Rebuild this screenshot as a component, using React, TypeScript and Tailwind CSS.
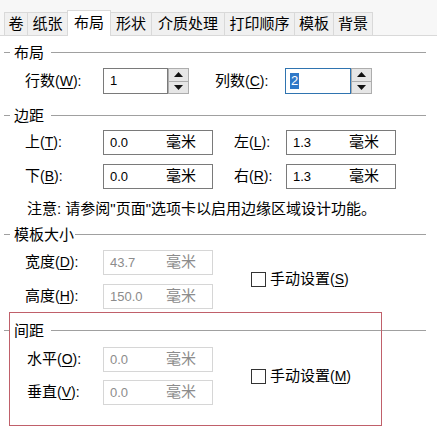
import React from 'react';

const tabs = [
  { label: '卷', w: 'w-[24px]' },
  { label: '纸张', w: 'w-[41px]' },
  { label: '布局', w: 'w-[44px]', active: true },
  { label: '形状', w: 'w-[42px]' },
  { label: '介质处理', w: 'w-[74px]' },
  { label: '打印顺序', w: 'w-[71px]' },
  { label: '模板', w: 'w-[40px]' },
  { label: '背景', w: 'w-[40px]' },
];

const Key = ({ k }: { k: string }) => (
  <span className="text-[14px]">
    (<span className="underline underline-offset-2">{k}</span>)
  </span>
);

const Header = ({ label, gap = 'ml-[7px]', mt }: { label: string; gap?: string; mt: string }) => (
  <div className={`flex items-center h-[20px] ${mt}`}>
    <span className="ml-[4px] w-[6px] h-px bg-[#a0a0a0]" />
    <span className="ml-[4px] text-[15px] leading-none">{label}</span>
    <span className={`${gap} mr-[11px] flex-1 h-px bg-[#a0a0a0]`} />
  </div>
);

const Field = ({ value, disabled }: { value: string; disabled?: boolean }) => (
  <div
    className={`w-[110px] h-[25px] flex items-center border ${
      disabled ? 'border-[#d6d6d6] text-[#8c8c8c]' : 'border-[#7a7a7a] text-black'
    }`}
  >
    <span className="pl-[6px] w-[62px] text-[13px]">{value}</span>
    <span className="text-[15px]">毫米</span>
  </div>
);

const Spinner = () => (
  <div className="w-[21px] h-[26px] flex flex-col border border-[#adadad] bg-[#e6e6e6]">
    <div className="flex-1 flex items-center justify-center border-b border-[#adadad]">
      <svg width="9" height="5" viewBox="0 0 9 5">
        <polygon points="0,5 9,5 4.5,0" fill="#111" />
      </svg>
    </div>
    <div className="flex-1 flex items-center justify-center">
      <svg width="9" height="5" viewBox="0 0 9 5">
        <polygon points="0,0 9,0 4.5,5" fill="#111" />
      </svg>
    </div>
  </div>
);

const Label = ({ text, k, cls }: { text: string; k: string; cls: string }) => (
  <div className={`${cls} text-[15px] flex items-center`}>
    {text}
    <Key k={k} />
    <span className="text-[14px]">:</span>
  </div>
);

const Check = ({ k }: { k: string }) => (
  <div className="ml-[38px] flex items-center">
    <span className="w-[15px] h-[15px] border border-[#333]" />
    <span className="ml-[4px] text-[15px]">手动设置</span>
    <Key k={k} />
  </div>
);

export default function App() {
  return (
    <div className="relative w-[437px] h-[446px] bg-white text-black font-['Liberation_Sans','Noto_Sans_CJK_SC',sans-serif]">
      {/* Tabs */}
      <div className="h-[36px] bg-[#f7f7f7] border-b border-[#d9d9d9] flex items-end pl-[4px]">
        {tabs.map((t) => (
          <div
            key={t.label}
            className={`${t.w} flex items-center justify-center text-[15px] border border-b-0 border-[#d9d9d9] -ml-px first:ml-0 ${
              t.active ? 'h-[26px] bg-white relative top-px' : 'h-[23px] bg-[#f0f0f0]'
            }`}
          >
            {t.label}
          </div>
        ))}
      </div>

      {/* 布局 */}
      <Header label="布局" mt="mt-[6px]" />
      <div className="mt-[6px] flex items-center h-[26px]">
        <Label text="行数" k="W" cls="pl-[25px] w-[103px]" />
        <div className="w-[65px] h-[26px] border border-[#7a7a7a] flex items-center pl-[6px] text-[13px]">1</div>
        <Spinner />
        <Label text="列数" k="C" cls="ml-[26px] w-[70px]" />
        <div className="w-[66px] h-[26px] border border-[#2f74b0] flex items-center pl-[4px] text-[13px]">
          <span className="bg-[#2f78c8] text-white px-px leading-[16px]">2</span>
        </div>
        <Spinner />
      </div>

      {/* 边距 */}
      <Header label="边距" mt="mt-[11px]" />
      <div className="mt-[5px] flex items-center">
        <Label text="上" k="T" cls="pl-[25px] w-[103px]" />
        <Field value="0.0" />
        <Label text="左" k="L" cls="ml-[21px] w-[52px]" />
        <Field value="1.3" />
      </div>
      <div className="mt-[9px] flex items-center">
        <Label text="下" k="B" cls="pl-[25px] w-[103px]" />
        <Field value="0.0" />
        <Label text="右" k="R" cls="ml-[21px] w-[52px]" />
        <Field value="1.3" />
      </div>
      <div className="mt-[10px] h-[20px] flex items-center pl-[27px] text-[15px]">
        注意: 请参阅"页面"选项卡以启用边缘区域设计功能。
      </div>

      {/* 模板大小 */}
      <Header label="模板大小" gap="ml-[1px]" mt="mt-[5px]" />
      <div className="mt-[6px] flex items-center">
        <div className="flex flex-col gap-[9px]">
          <div className="flex items-center">
            <Label text="宽度" k="D" cls="pl-[25px] w-[103px]" />
            <Field value="43.7" disabled />
          </div>
          <div className="flex items-center">
            <Label text="高度" k="H" cls="pl-[25px] w-[103px]" />
            <Field value="150.0" disabled />
          </div>
        </div>
        <Check k="S" />
      </div>

      {/* 间距 */}
      <Header label="间距" mt="mt-[11px]" />
      <div className="mt-[7px] flex items-center">
        <div className="flex flex-col gap-[8px]">
          <div className="flex items-center">
            <Label text="水平" k="O" cls="pl-[27px] w-[103px]" />
            <Field value="0.0" disabled />
          </div>
          <div className="flex items-center">
            <Label text="垂直" k="V" cls="pl-[27px] w-[103px]" />
            <Field value="0.0" disabled />
          </div>
        </div>
        <Check k="M" />
      </div>

      {/* annotation box */}
      <div className="absolute left-[9px] top-[312px] w-[373px] h-[114px] border border-[#c0606a] pointer-events-none" />
    </div>
  );
}
